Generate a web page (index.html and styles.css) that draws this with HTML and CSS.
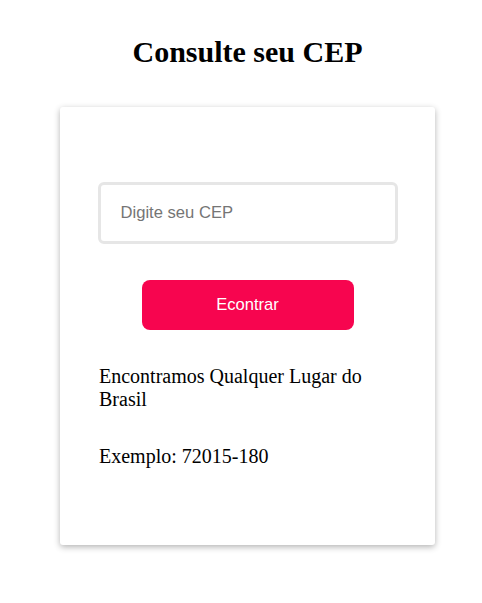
FILE: index.html
```html
<!DOCTYPE html>
<html lang="pt-BR">
<head>
<meta charset="utf-8">
<title>Consulte seu CEP</title>
<link rel="stylesheet" href="styles.css">
</head>
<body>
<main class="page">
  <h1 class="title">Consulte seu CEP</h1>
  <section class="card">
    <input class="cep-input" type="text" placeholder="Digite seu CEP">
    <button class="find-btn" type="button">Econtrar</button>
    <p class="info">Encontramos Qualquer Lugar do Brasil</p>
    <p class="info example">Exemplo: 72015-180</p>
  </section>
</main>
</body>
</html>
```
FILE: styles.css
```css
html, body {
  margin: 0;
  padding: 0;
  background: #ffffff;
}
body {
  font-family: "Liberation Serif", "Times New Roman", serif;
  color: #000;
}
.page {
  display: flex;
  flex-direction: column;
  align-items: center;
  padding: 33px 0 40px 13px;
}
.title {
  margin: 0;
  font-size: 30px;
  font-weight: bold;
  line-height: 37px;
}
.card {
  box-sizing: border-box;
  width: 375px;
  height: 438px;
  margin-top: 37px;
  padding: 75px 37px 0 37px;
  background: #fff;
  border-radius: 3px;
  box-shadow: 0 2px 6px rgba(0, 0, 0, 0.3);
  display: flex;
  flex-direction: column;
  align-items: center;
}
.cep-input {
  box-sizing: border-box;
  width: 300px;
  height: 62px;
  border: 3px solid #e6e6e6;
  border-radius: 6px;
  padding: 0 20px;
  font-family: "Liberation Sans", Arial, sans-serif;
  font-size: 16.6px;
  color: #333;
  outline: none;
}
.cep-input::placeholder {
  color: #757575;
}
.find-btn {
  margin-top: 36px;
  width: 212px;
  height: 50px;
  border: none;
  border-radius: 8px;
  background: #f7054f;
  color: #fff;
  font-family: "Liberation Sans", Arial, sans-serif;
  font-size: 16.6px;
  cursor: pointer;
}
.info {
  align-self: stretch;
  margin: 35px 0 0 0;
  padding-left: 2px;
  font-size: 20px;
  line-height: 23px;
}
.example {
  margin-top: 34px;
}
```
